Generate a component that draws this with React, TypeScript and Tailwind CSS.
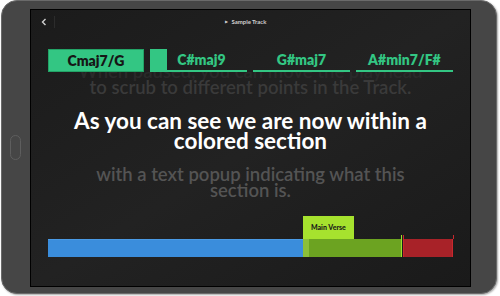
import React from "react";

const chords = [
  { name: "Cmaj7/G", state: "done" },
  { name: "C#maj9", state: "active" },
  { name: "G#maj7", state: "next" },
  { name: "A#min7/F#", state: "next" },
];

function ChordCell({ name, state }: { name: string; state: string }) {
  if (state === "done") {
    return (
      <div className="w-[96px] h-[23px] bg-[#33c683] border border-[#22a366] flex items-center justify-center">
        <span className="text-[14px] font-extrabold text-[#161616]">{name}</span>
      </div>
    );
  }
  return (
    <div className="relative w-[97px] h-[23px] flex items-center justify-center border-b-2 border-[#33c683]">
      {state === "active" && (
        <div className="absolute left-0 top-0 bottom-0 w-[17px] bg-[#33c683]" />
      )}
      <span className={`text-[14px] font-extrabold text-[#33c683] ${state === "active" ? "pl-[6px]" : ""}`}>{name}</span>
    </div>
  );
}

export default function App() {
  return (
    <div className="w-[500px] h-[296px] bg-white overflow-hidden" style={{ fontFamily: "Lato, 'Open Sans', sans-serif" }}>
      {/* Tablet frame */}
      <div className="ml-[1px] w-[496px] h-[294px] rounded-[16px] bg-[#464646] border border-[#6a6a6a] flex items-center pl-[8px] pr-[25px] shadow-[1px_1px_2px_rgba(0,0,0,0.35)]">
        <div className="w-[20px] flex justify-start">
          <div className="w-[11px] h-[25px] rounded-full border border-[#5e5e5e]" />
        </div>
        {/* Screen */}
        <div className="w-[443px] h-[278px] mt-[1px] border border-black bg-gradient-to-br from-[#1b1b1b] via-[#222222] to-[#1a1a1a] flex flex-col">
          {/* Top bar */}
          <div className="h-[24px] flex items-center px-[9px]">
            <svg width="6" height="8" viewBox="0 0 6 8" className="ml-[1px]">
              <path d="M4.5 1 L1.5 4 L4.5 7" stroke="#cfcfcf" strokeWidth="1.4" fill="none" />
            </svg>
            <div className="ml-[7px] w-px h-[12px] bg-[#2c2c2c]" />
            <div className="flex-1 flex items-center justify-center gap-[3px] pr-[24px]">
              <span className="text-[4px] text-[#cfcfcf]">▶</span>
              <span className="text-[6px] font-bold text-[#cfcfcf]">Sample Track</span>
            </div>
          </div>

          {/* Chords */}
          <div className="mt-[15px] flex px-[17px] gap-[6px] relative z-10">
            {chords.map((c) => (
              <ChordCell key={c.name} name={c.name} state={c.state} />
            ))}
          </div>

          {/* Lyrics */}
          <div className="h-[166px] overflow-hidden flex flex-col items-center text-center">
            <div className="mt-[-9px] text-[18.5px] leading-[16px] font-semibold whitespace-nowrap">
              <p className="text-[#2a2a2a]">When paused, you can move the playhead</p>
              <p className="text-[#3a3a3a]">to scrub to different points in the Track.</p>
            </div>
            <div className="mt-[16px] text-[22.5px] leading-[20px] font-bold text-white whitespace-nowrap">
              <p>As you can see we are now within a</p>
              <p>colored section</p>
            </div>
            <div className="mt-[15px] text-[18.5px] leading-[16px] font-semibold text-[#545454] whitespace-nowrap">
              <p>with a text popup indicating what this</p>
              <p>section is.</p>
            </div>
          </div>

          {/* Timeline */}
          <div className="relative mt-[1px] ml-[17px] w-[406px] h-[18px] flex">
            <div className="w-[255px] h-full bg-[#3a8ddc] border-t border-[#4a9be6]" />
            <div className="w-[99px] h-full flex bg-[#6ca321]">
              <div className="w-[6px] h-full bg-[#8cbf3a]" />
              <div className="flex-1" />
              <div className="w-px h-full bg-[#9be22b]" />
            </div>
            <div className="w-px" />
            <div className="w-[50px] h-full bg-[#a82228] border-x border-[#c8282e]" />

            {/* Markers */}
            <div className="absolute left-[353px] top-[-4px] w-px h-[4px] bg-[#9be22b]" />
            <div className="absolute left-[355px] top-[-4px] w-px h-[4px] bg-[#c8282e]" />
            <div className="absolute left-[405px] top-[-4px] w-px h-[4px] bg-[#c8282e]" />

            {/* Section popup */}
            <div className="absolute left-[255px] top-[-23px] w-[51px] h-[23px] bg-[#a6e22e] flex items-center justify-center">
              <span className="text-[7px] font-black text-[#1a1a1a]">Main Verse</span>
            </div>
          </div>
        </div>
      </div>
    </div>
  );
}
